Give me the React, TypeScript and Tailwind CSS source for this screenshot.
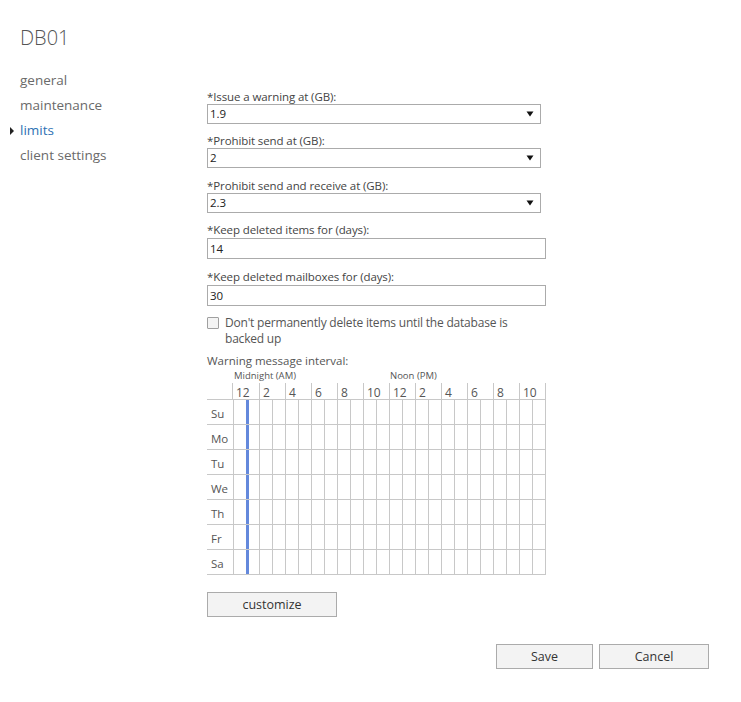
import React from "react";

const font = { fontFamily: '"Open Sans", "Noto Sans", Arial, sans-serif' };

function Caret() {
  return (
    <svg width="8" height="6" viewBox="0 0 8 6" className="block">
      <path d="M0.5 0.5 L7.5 0.5 L4 5.5 Z" fill="#111" />
    </svg>
  );
}

function SelectField({ label, value, mb }: { label: string; value: string; mb: string }) {
  return (
    <div className={mb}>
      <div className="h-[15px] leading-[15px] text-[11.5px] tracking-[-0.1px] text-[#444]">{label}</div>
      <div className="w-[334px] h-[20px] border border-[#ababab] bg-white flex items-center justify-between pl-[2px] pr-[6px]">
        <span className="text-[11.5px] leading-[18px] text-[#222]">{value}</span>
        <Caret />
      </div>
    </div>
  );
}

function TextField({ label, value, mb }: { label: string; value: string; mb: string }) {
  return (
    <div className={mb}>
      <div className="h-[16px] leading-[16px] text-[11.5px] tracking-[-0.1px] text-[#444]">{label}</div>
      <div className="w-[339px] h-[21px] border border-[#ababab] bg-white flex items-center pl-[2px]">
        <span className="text-[11.5px] leading-[18px] text-[#222]">{value}</span>
      </div>
    </div>
  );
}

const days = ["Su", "Mo", "Tu", "We", "Th", "Fr", "Sa"];
const hourLabels = ["12", "2", "4", "6", "8", "10", "12", "2", "4", "6", "8", "10"];

function Schedule() {
  return (
    <div className="w-[339px]">
      <div className="flex h-[14px] items-center text-[9.5px] text-[#555]">
        <div className="w-[26px]" />
        <div className="w-[156px] pl-[1px]">Midnight (AM)</div>
        <div className="pl-[1px]">Noon (PM)</div>
      </div>
      <div className="flex h-[17px] border-b border-[#c8c8c8]">
        <div className="w-[26px] border-r border-[#c8c8c8]" />
        {hourLabels.map((h, i) => (
          <div
            key={i}
            className={`text-[12px] leading-[19px] pl-[3px] text-[#555] ${i === 11 ? "w-[27px] border-r" : "w-[26px]"} ${i > 0 ? "border-l" : ""} border-[#c8c8c8]`}
          >
            {h}
          </div>
        ))}
      </div>
      {days.map((d) => (
        <div key={d} className="flex h-[25px] border-b border-[#c8c8c8]">
          <div className="w-[26px] text-[11.5px] leading-[27px] pl-[4px] text-[#555]">{d}</div>
          {Array.from({ length: 24 }).map((_, i) => (
            <div
              key={i}
              className={`h-full border-l ${i === 1 ? "border-l-[3px] border-l-[#6489dc]" : "border-[#c8c8c8]"} ${i === 23 ? "border-r border-r-[#c8c8c8] w-[14px]" : "w-[13px]"}`}
            />
          ))}
        </div>
      ))}
    </div>
  );
}

export default function App() {
  return (
    <div className="w-[741px] h-[702px] bg-white relative flex" style={font}>
      <div className="w-[207px] shrink-0 pt-[26px]">
        <div className="pl-[20px] text-[20px] leading-[24px] text-[#555] font-light">DB01</div>
        <div className="mt-[18px] text-[13.5px] leading-[25px] text-[#6a6a6a]">
          <div className="pl-[20px]">general</div>
          <div className="pl-[20px]">maintenance</div>
          <div className="flex items-center">
            <div className="w-[20px] flex justify-start pl-[10px]">
              <svg width="4" height="8" viewBox="0 0 4 8">
                <path d="M0 0 L4 4 L0 8 Z" fill="#222" />
              </svg>
            </div>
            <span className="text-[#2f72b4]">limits</span>
          </div>
          <div className="pl-[20px]">client settings</div>
        </div>
      </div>
      <div className="flex-1 flex flex-col pt-[89px]">
        <SelectField label="*Issue a warning at (GB):" value="1.9" mb="mb-[9px]" />
        <SelectField label="*Prohibit send at (GB):" value="2" mb="mb-[10px]" />
        <SelectField label="*Prohibit send and receive at (GB):" value="2.3" mb="mb-[9px]" />
        <TextField label="*Keep deleted items for (days):" value="14" mb="mb-[10px]" />
        <TextField label="*Keep deleted mailboxes for (days):" value="30" mb="mb-[9px]" />
        <div className="flex items-start">
          <div className="w-[12px] h-[12px] mt-[2px] border border-[#a0a0a0] bg-[#f4f4f4] rounded-[1px] shrink-0" />
          <div className="ml-[6px] w-[290px] text-[12px] leading-[16px] tracking-[-0.2px] text-[#555]">
            Don't permanently delete items until the database is backed up
          </div>
        </div>
        <div className="mt-[6px] text-[11.5px] leading-[16px] text-[#555]">Warning message interval:</div>
        <Schedule />
        <div className="mt-[17px] w-[130px] h-[25px] border border-[#ababab] bg-[#f3f3f3] flex items-center justify-center pt-[2px] text-[12.5px] text-[#333]">
          customize
        </div>
        <div className="mt-[27px] w-[502px] flex justify-end gap-[6px]">
          <div className="w-[97px] h-[25px] border border-[#ababab] bg-[#f3f3f3] flex items-center justify-center pt-[2px] text-[12.5px] text-[#333]">
            Save
          </div>
          <div className="w-[110px] h-[25px] border border-[#ababab] bg-[#f3f3f3] flex items-center justify-center pt-[2px] text-[12.5px] text-[#333]">
            Cancel
          </div>
        </div>
      </div>
    </div>
  );
}
